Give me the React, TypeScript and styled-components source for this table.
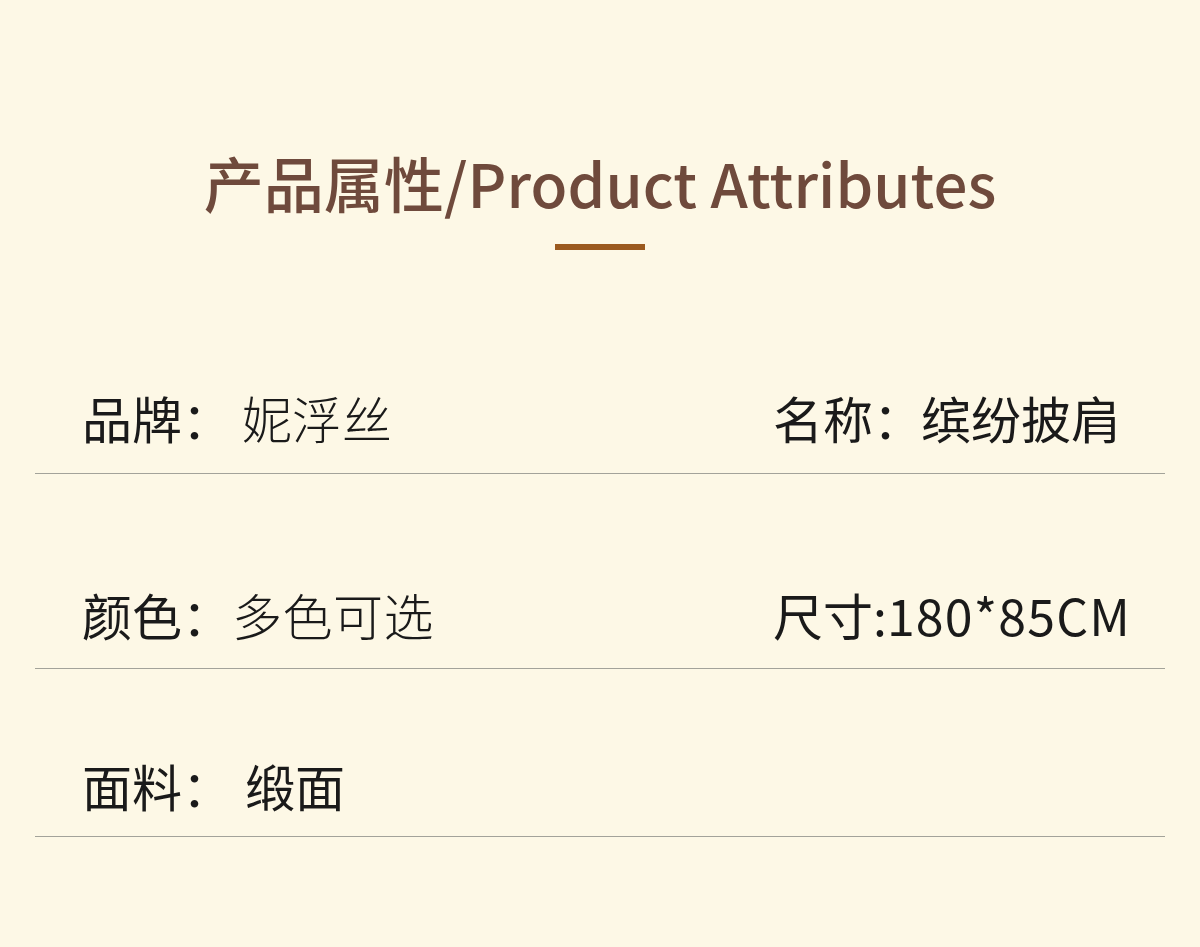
import * as React from 'react';
import styled, { createGlobalStyle } from 'styled-components';

const GlobalStyle = createGlobalStyle`
  html, body {
    margin: 0;
    padding: 0;
    background: #fdf8e6;
  }
  body {
    font-family: "Noto Sans CJK SC", "Noto Sans", sans-serif;
  }
`;

const Page = styled.div`
  width: 1200px;
  min-height: 947px;
  box-sizing: border-box;
  background: #fdf8e6;
  padding: 147px 35px 0;
  display: flex;
  flex-direction: column;
  align-items: center;
`;

const Title = styled.h1`
  margin: 0;
  font-size: 60px;
  line-height: 70px;
  font-weight: 500;
  color: #6f4a3c;
  letter-spacing: 0.1px;
`;

const Bar = styled.div`
  width: 90px;
  height: 6px;
  margin-top: 27px;
  background: #9b5a1f;
`;

const List = styled.div`
  align-self: stretch;
  margin-top: 137px;
  display: flex;
  flex-direction: column;
`;

const Row = styled.div<{ $top: number; $bottom: number }>`
  display: grid;
  grid-template-columns: 691px 1fr;
  padding: ${({ $top }) => $top}px 0 ${({ $bottom }) => $bottom}px 47px;
  border-bottom: 1px solid #a3a39a;
`;

const Cell = styled.div`
  display: flex;
  align-items: center;
  font-size: 50px;
  line-height: 60px;
  color: #1a1a1a;
  white-space: nowrap;
`;

const Label = styled.span`
  font-weight: 400;
`;

const Value = styled.span<{ $gap: number; $light?: boolean; $spacing?: number }>`
  margin-left: ${({ $gap }) => $gap}px;
  font-weight: ${({ $light }) => ($light ? 300 : 400)};
  letter-spacing: ${({ $spacing }) => $spacing ?? 0}px;
`;

type Attr = { label: string; value: string; gap: number; light?: boolean; spacing?: number };

const rows: { top: number; bottom: number; cells: Attr[] }[] = [
  {
    top: 0,
    bottom: 26,
    cells: [
      { label: '品牌：', value: '妮浮丝', gap: 10, light: true },
      { label: '名称：', value: '缤纷披肩', gap: -2 },
    ],
  },
  {
    top: 110,
    bottom: 24,
    cells: [
      { label: '颜色：', value: '多色可选', gap: 0, light: true, spacing: 0.5 },
      { label: '尺寸:', value: '180*85CM', gap: 0, spacing: 1.2 },
    ],
  },
  {
    top: 86,
    bottom: 21,
    cells: [{ label: '面料：', value: '缎面', gap: 13 }],
  },
];

export default function App() {
  return (
    <>
      <GlobalStyle />
      <Page>
        <Title>产品属性/Product Attributes</Title>
        <Bar />
        <List>
          {rows.map((row, i) => (
            <Row key={i} $top={row.top} $bottom={row.bottom}>
              {row.cells.map((c) => (
                <Cell key={c.label}>
                  <Label>{c.label}</Label>
                  <Value $gap={c.gap} $light={c.light} $spacing={c.spacing}>
                    {c.value}
                  </Value>
                </Cell>
              ))}
            </Row>
          ))}
        </List>
      </Page>
    </>
  );
}
